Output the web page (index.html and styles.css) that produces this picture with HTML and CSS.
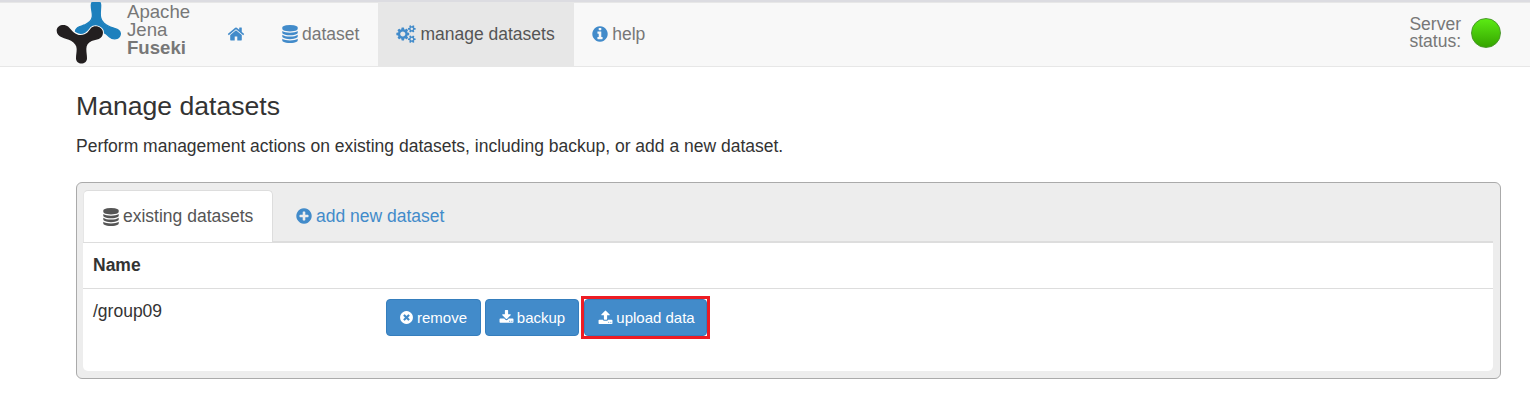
FILE: index.html
```html
<!DOCTYPE html>
<html lang="en">
<head>
<meta charset="utf-8">
<title>Apache Jena Fuseki - manage datasets</title>
<link rel="stylesheet" href="styles.css">
</head>
<body>
<svg class="sprite" aria-hidden="true">
  <symbol id="home" viewBox="0 0 1792 1792"><path d="M1472 992v480q0 26-19 45t-45 19h-384v-384h-256v384h-384q-26 0-45-19t-19-45v-480q0-1 .5-3t.5-3l575-474 575 474q1 2 1 6zm223-69l-62 74q-8 9-21 11h-3q-13 0-21-7l-692-577-692 577q-12 8-24 7-13-2-21-11l-62-74q-8-10-7-23.500t11-21.500l719-599q32-26 76-26t76 26l244 204v-195q0-14 9-23t23-9h192q14 0 23 9t9 23v408l219 182q10 8 11 21.500t-7 23.500z"/></symbol>
  <symbol id="database" viewBox="128 0 1536 1792"><path d="M896 768q237 0 443-43t325-127v170q0 69-103 128t-280 93.500-385 34.500-385-34.500-280-93.500-103-128v-170q119 84 325 127t443 43zm0 768q237 0 443-43t325-127v170q0 69-103 128t-280 93.500-385 34.500-385-34.500-280-93.500-103-128v-170q119 84 325 127t443 43zm0-384q237 0 443-43t325-127v170q0 69-103 128t-280 93.500-385 34.500-385-34.500-280-93.500-103-128v-170q119 84 325 127t443 43zm0-1152q208 0 385 34.500t280 93.500 103 128v128q0 69-103 128t-280 93.500-385 34.500-385-34.500-280-93.500-103-128v-128q0-69 103-128t280-93.500 385-34.500z"/></symbol>
  <symbol id="cogs" viewBox="0 0 1920 1792"><path d="M896 896q0-106-75-181t-181-75-181 75-75 181 75 181 181 75 181-75 75-181zm768 512q0-52-38-90t-90-38-90 38-38 90q0 53 37.500 90.500t90.500 37.500 90.500-37.500 37.500-90.500zm0-1024q0-52-38-90t-90-38-90 38-38 90q0 53 37.500 90.500t90.500 37.500 90.500-37.500 37.500-90.500zm-384 421v185q0 10-7 19.500t-16 10.500l-155 24q-11 35-32 76 34 48 90 115 7 11 7 20 0 12-7 19-23 30-82.500 89.500t-78.500 59.500q-11 0-21-7l-115-90q-37 19-77 31-11 108-23 155-7 24-30 24h-186q-11 0-20-7.500t-10-17.500l-23-153q-34-10-75-31l-118 89q-7 7-20 7-11 0-21-8-144-133-144-160 0-9 7-19 10-14 41-53t47-61q-23-44-35-82l-152-24q-10-1-17-9.500t-7-19.500v-185q0-10 7-19.500t16-10.500l155-24q11-35 32-76-34-48-90-115-7-11-7-20 0-12 7-20 22-30 82-89t79-59q11 0 21 7l115 90q34-18 77-32 11-108 23-154 7-24 30-24h186q11 0 20 7.500t10 17.500l23 153q34 10 75 31l118-89q8-7 20-7 11 0 21 8 144 133 144 160 0 8-7 19-12 16-42 54t-45 60q23 48 34 82l152 23q10 2 17 10.500t7 19.500zm640 533v140q0 16-149 31-12 27-30 52 51 113 51 138 0 4-4 7-122 71-124 71-8 0-46-47t-52-68q-20 2-30 2t-30-2q-14 21-52 68t-46 47q-2 0-124-71-4-3-4-7 0-25 51-138-18-25-30-52-149-15-149-31v-140q0-16 149-31 13-29 30-52-51-113-51-138 0-4 4-7 4-2 35-20t59-34 30-16q8 0 46 46.500t52 67.500q20-2 30-2t30 2q51-71 92-112l6-2q4 0 124 70 4 3 4 7 0 25-51 138 17 23 30 52 149 15 149 31zm0-1024v140q0 16-149 31-12 27-30 52 51 113 51 138 0 4-4 7-122 71-124 71-8 0-46-47t-52-68q-20 2-30 2t-30-2q-14 21-52 68t-46 47q-2 0-124-71-4-3-4-7 0-25 51-138-18-25-30-52-149-15-149-31v-140q0-16 149-31 13-29 30-52-51-113-51-138 0-4 4-7 4-2 35-20t59-34 30-16q8 0 46 46.500t52 67.500q20-2 30-2t30 2q51-71 92-112l6-2q4 0 124 70 4 3 4 7 0 25-51 138 17 23 30 52 149 15 149 31z"/></symbol>
  <symbol id="info" viewBox="128 0 1536 1792"><path d="M1152 1376v-160q0-14-9-23t-23-9h-96v-512q0-14-9-23t-23-9h-320q-14 0-23 9t-9 23v160q0 14 9 23t23 9h96v320h-96q-14 0-23 9t-9 23v160q0 14 9 23t23 9h448q14 0 23-9t9-23zm-128-896v-160q0-14-9-23t-23-9h-192q-14 0-23 9t-9 23v160q0 14 9 23t23 9h192q14 0 23-9t9-23zm640 416q0 209-103 385.500t-279.500 279.500-385.500 103-385.500-103-279.500-279.500-103-385.500 103-385.500 279.500-279.500 385.500-103 385.500 103 279.500 279.500 103 385.500z"/></symbol>
  <symbol id="plus" viewBox="128 0 1536 1792"><path d="M1344 960v-128q0-26-19-45t-45-19h-256v-256q0-26-19-45t-45-19h-128q-26 0-45 19t-19 45v256h-256q-26 0-45 19t-19 45v128q0 26 19 45t45 19h256v256q0 26 19 45t45 19h128q26 0 45-19t19-45v-256h256q26 0 45-19t19-45zm320-64q0 209-103 385.500t-279.500 279.500-385.500 103-385.500-103-279.500-279.500-103-385.500 103-385.500 279.500-279.500 385.500-103 385.500 103 279.500 279.500 103 385.500z"/></symbol>
  <symbol id="times" viewBox="128 0 1536 1792"><path d="M1277 1122q0-26-19-45l-181-181 181-181q19-19 19-45 0-27-19-46l-90-90q-19-19-46-19-26 0-45 19l-181 181-181-181q-19-19-45-19-27 0-46 19l-90 90q-19 19-19 46 0 26 19 45l181 181-181 181q-19 19-19 45 0 27 19 46l90 90q19 19 46 19 26 0 45-19l181-181 181 181q19 19 45 19 27 0 46-19l90-90q19-19 19-46zm387-226q0 209-103 385.500t-279.500 279.500-385.500 103-385.500-103-279.500-279.500-103-385.500 103-385.500 279.500-279.500 385.500-103 385.500 103 279.500 279.500 103 385.500z"/></symbol>
  <symbol id="download" viewBox="64 0 1664 1792"><path d="M1344 1344q0-26-19-45t-45-19-45 19-19 45 19 45 45 19 45-19 19-45zm256 0q0-26-19-45t-45-19-45 19-19 45 19 45 45 19 45-19 19-45zm128-224v320q0 40-28 68t-68 28h-1472q-40 0-68-28t-28-68v-320q0-40 28-68t68-28h465l135 136q58 56 136 56t136-56l136-136h464q40 0 68 28t28 68zm-325-569q17 41-14 70l-448 448q-18 19-45 19t-45-19l-448-448q-31-29-14-70 17-39 59-39h256v-448q0-26 19-45t45-19h256q26 0 45 19t19 45v448h256q42 0 59 39z"/></symbol>
  <symbol id="upload" viewBox="64 0 1664 1792"><path d="M1344 1472q0-26-19-45t-45-19-45 19-19 45 19 45 45 19 45-19 19-45zm256 0q0-26-19-45t-45-19-45 19-19 45 19 45 45 19 45-19 19-45zm128-224v320q0 40-28 68t-68 28h-1472q-40 0-68-28t-28-68v-320q0-40 28-68t68-28h427q21 56 70.500 92t110.500 36h256q61 0 110.500-36t70.500-92h427q40 0 68 28t28 68zm-325-648q-17 40-59 40h-256v448q0 26-19 45t-45 19h-256q-26 0-45-19t-19-45v-448h-256q-42 0-59-40-17-39 14-69l448-448q18-19 45-19t45 19l448 448q31 30 14 69z"/></symbol>
</svg>

<header class="navbar">
  <a class="brand">
    <svg class="logo" viewBox="48 6 198 186">
      <path fill="#1d80bd" stroke="#1d80bd" stroke-width="4" d="M154 16C154-4 182-4 182 16C182 32 179 40 182 53C185 68 196 74 211 81C228 86 242 90 241 102C239 119 219 120 208 110C198 100 188 92 169 92C150 92 146 99 139 105C127 116 106 110 106 95C107 81 120 80 134 75C149 68 156 61 157 50C158 38 154 30 154 16Z"/>
      <path fill="#231f20" stroke="#f8f8f8" stroke-width="6" paint-order="stroke" d="M50 92C50 74 74 71 85 80C97 92 105 105 122 105C140 105 146 93 153 84C165 73 189 81 189 98C188 119 168 118 155 123C144 129 139 136 139 147C139 158 141 164 141 175C141 196 108 196 108 175C108 164 110 158 110 147C110 136 104 129 93 122C77 114 50 112 50 92Z"/>
    </svg>
    <span class="brand-text">Apache<br>Jena<br><strong>Fuseki</strong></span>
  </a>
  <nav class="menu">
    <a class="menu-item"><svg class="icon home"><use href="#home"/></svg></a>
    <a class="menu-item"><svg class="icon database"><use href="#database"/></svg>dataset</a>
    <a class="menu-item active"><svg class="icon cogs"><use href="#cogs"/></svg>manage datasets</a>
    <a class="menu-item"><svg class="icon"><use href="#info"/></svg>help</a>
  </nav>
  <div class="status"><span>Server<br>status:</span><i class="light"></i></div>
</header>

<main class="page">
  <h1>Manage datasets</h1>
  <p class="lead">Perform management actions on existing datasets, including backup, or add a new dataset.</p>
  <section class="panel">
    <div class="tabs">
      <a class="tab current"><svg class="icon database"><use href="#database"/></svg>existing datasets</a>
      <a class="tab"><svg class="icon"><use href="#plus"/></svg>add new dataset</a>
    </div>
    <div class="table">
      <div class="row head">Name</div>
      <div class="row">
        <div class="name">/group09</div>
        <div class="actions">
          <button class="btn remove"><svg class="icon"><use href="#times"/></svg>remove</button>
          <button class="btn backup"><svg class="icon wide"><use href="#download"/></svg>backup</button>
          <span class="highlight"><button class="btn upload"><svg class="icon wide"><use href="#upload"/></svg>upload data</button></span>
        </div>
      </div>
    </div>
  </section>
</main>
</body>
</html>
```
FILE: styles.css
```css
* { box-sizing: border-box; }
body {
  margin: 0;
  border-top: 2px solid #dcdce1;
  background: #fff;
  color: #333;
  font: 17.5px/25px "Liberation Sans", Arial, sans-serif;
}
.sprite { position: absolute; width: 0; height: 0; }
.icon { width: 16px; height: 18px; margin-right: 4px; fill: currentColor; flex: none; }

.navbar {
  display: flex;
  height: 65px;
  padding-left: 56px;
  border-top: 1px solid #e7e7e7;
  border-bottom: 1px solid #e7e7e7;
  background: #f8f8f8;
  color: #777;
}
.brand { display: flex; width: 162px; }
.logo { width: 66px; height: 62px; margin-top: -1px; }
.brand-text { margin: 0 0 0 5px; font-size: 18.6px; line-height: 18px; }
.menu { display: flex; }
.menu-item { display: flex; align-items: center; padding: 0 18.4px 0 18.6px; white-space: nowrap; }
.menu-item:first-child { padding-left: 9px; }
.menu-item .icon { margin-top: -1px; color: #428bca; }
.menu-item .home { width: 18px; margin-right: 0; }
.menu-item .cogs { width: 20px; }
.menu-item.active { margin: -1px 0; padding-right: 19px; background: #e7e7e7; color: #555; }
.status { display: flex; align-items: center; margin-left: auto; padding: 0 29px 3px 0; line-height: 17px; }
.light {
  width: 30px;
  height: 30px;
  margin-left: 10px;
  border: 1px solid #4a9a2a;
  border-radius: 50%;
  background: linear-gradient(#5bea13, #35a400);
}

.page { padding: 24px 29px 0 76px; }
h1 { margin: 0; font-size: 26.6px; font-weight: 400; line-height: 31px; }
.lead { margin: 12px 0 23px; }
.panel {
  height: 197px;
  padding: 7px 7px 7px 6px;
  border: 1px solid #aaa;
  border-radius: 6px;
  background: #ededed;
}
.tabs { display: flex; height: 53px; border-bottom: 2px solid #ddd; }
.tab { display: flex; align-items: center; padding: 1px 23px 0; color: #428bca; }
.tab.current {
  width: 190px;
  height: 52px;
  padding: 0 0 0 19px;
  border: 1px solid #ddd;
  border-bottom: 0;
  border-left-color: #e6e6e6;
  border-radius: 5px 5px 0 0;
  background: #fff;
  color: #555;
}
.table { height: 128px; border-radius: 0 0 5px 5px; background: #fff; }
.row { display: flex; padding: 10px; }
.row.head { height: 46px; border-bottom: 1px solid #ddd; font-weight: 700; }
.name { width: 293px; }
.actions { display: flex; align-items: flex-start; }
.btn {
  display: flex;
  align-items: center;
  justify-content: center;
  height: 37px;
  padding: 0;
  border: 1px solid #357ebd;
  border-radius: 4px;
  background: #428bca;
  color: #fff;
  font: 15px/22px "Liberation Sans", Arial, sans-serif;
}
.btn .icon { width: 13px; height: 15px; }
.btn .wide { width: 15px; height: 15px; margin: -1px 3px 0 0; }
.remove { width: 95px; margin-right: 4px; }
.backup { width: 94px; margin-right: 2px; }
.highlight { margin-top: -3px; border: 3px solid #ed1c24; background: #fff; }
.upload { width: 123px; padding-left: 2px; }
```
